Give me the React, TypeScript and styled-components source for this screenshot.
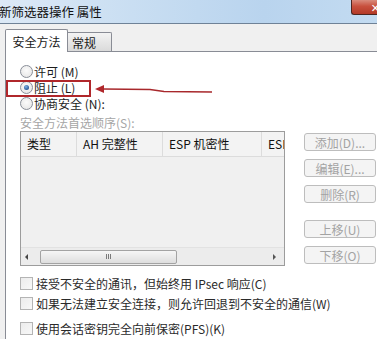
import styled, { createGlobalStyle } from "styled-components"

const GlobalStyle = createGlobalStyle`
  html, body {
    margin: 0;
    padding: 0;
    background: #f0f0f0;
    overflow: hidden;
  }
  body {
    font-family: "Noto Sans CJK SC", "DejaVu Sans", sans-serif;
    font-size: 12px;
    color: #1a1a1a;
  }
`

const Window = styled.div`
  position: relative;
  width: 377px;
  height: 339px;
  overflow: hidden;
  display: flex;
  flex-direction: column;
  background: #f0f0f0;
`

const TitleBar = styled.div`
  height: 23px;
  flex-shrink: 0;
  display: flex;
  justify-content: space-between;
  align-items: flex-start;
  border-bottom: 1px solid #6f8297;
  background: linear-gradient(to right, #dce9f6 0%, #c9def2 35%, #b9d4ee 70%, #c3dbf1 100%);
`

const Title = styled.div`
  margin-left: -1px;
  line-height: 23px;
  font-size: 12.5px;
  color: #111;
`

const CloseBtn = styled.div`
  width: 25px;
  height: 14px;
  border: 1px solid #4d2620;
  border-top: none;
  border-right: none;
  border-radius: 0 0 0 3px;
  background: linear-gradient(#d98b7c 0%, #c8503d 45%, #b33a28 100%);
  display: flex;
  justify-content: flex-end;
  align-items: center;
  overflow: hidden;
  color: #fff;
  font-size: 11px;
  font-weight: bold;
  line-height: 1;
`

const Body = styled.div`
  flex: 1;
  display: flex;
  flex-direction: column;
  padding: 5px 0 0 5px;
`

const TabStrip = styled.div`
  height: 22px;
  display: flex;
  align-items: flex-end;
`

const Tab = styled.div<{ $active?: boolean }>`
  box-sizing: border-box;
  border: 1px solid #898c95;
  border-bottom: none;
  display: flex;
  align-items: center;
  position: relative;
  z-index: ${(p) => (p.$active ? 1 : 0)};
  ${(p) =>
    p.$active
      ? `
    width: 63px;
    height: 23px;
    margin-bottom: -1px;
    justify-content: center;
    background: #fff;
    border-radius: 2px 2px 0 0;
  `
      : `
    width: 44px;
    height: 19px;
    padding-left: 4px;
    border-left: none;
    background: linear-gradient(#f3f3f3, #dadada);
    border-radius: 0 2px 0 0;
  `}
`

const Panel = styled.div`
  flex: 1;
  background: #fff;
  border-left: 1px solid #898c95;
  border-top: 1px solid #898c95;
  padding: 11px 0 0 14px;
  display: flex;
  flex-direction: column;
`

const OptionRow = styled.label`
  height: 16px;
  display: flex;
  align-items: center;
  gap: 1px;
  color: #1c1c1c;
`

const Radio = styled.span<{ $checked?: boolean }>`
  box-sizing: border-box;
  width: 13px;
  height: 13px;
  border-radius: 50%;
  border: 1px solid #8a8f99;
  background: radial-gradient(circle at 50% 40%, #fbfbfb 0%, #e3e3e3 100%);
  display: flex;
  align-items: center;
  justify-content: center;
  &::after {
    content: "";
    display: ${(p) => (p.$checked ? "block" : "none")};
    width: 5px;
    height: 5px;
    border-radius: 50%;
    background: radial-gradient(circle at 40% 35%, #7fb2e6 0%, #1f4f8e 80%);
  }
`

const GroupLabel = styled.div`
  margin-top: 4px;
  line-height: 16px;
  color: #a6a6a6;
`

const ListRow = styled.div`
  display: flex;
  gap: 19px;
`

const ListBox = styled.div`
  box-sizing: border-box;
  width: 265px;
  height: 135px;
  border: 1px solid #9c9c9c;
  background: #f0f0f0;
  display: flex;
  flex-direction: column;
  overflow: hidden;
`

const HeaderRow = styled.div`
  height: 24px;
  flex-shrink: 0;
  display: flex;
  border-bottom: 1px solid #dcdcdc;
  background: #f3f3f3;
`

const HeaderCell = styled.div<{ $w: number }>`
  box-sizing: border-box;
  width: ${(p) => p.$w}px;
  flex-shrink: 0;
  padding-left: 6px;
  line-height: 24px;
  white-space: nowrap;
  overflow: hidden;
  color: #111;
  border-right: 1px solid #dcdcdc;
`

const ListArea = styled.div`
  flex: 1;
`

const HScroll = styled.div`
  height: 17px;
  flex-shrink: 0;
  border-top: 1px solid #e2e2e2;
  background: #ececec;
  display: flex;
  align-items: center;
  padding: 0 8px 0 4px;
`

const Arrow = styled.span<{ $dir: "left" | "right" }>`
  width: 0;
  height: 0;
  border-top: 3px solid transparent;
  border-bottom: 3px solid transparent;
  ${(p) =>
    p.$dir === "left"
      ? "border-right: 3px solid #444; margin-right: 12px;"
      : "border-left: 3px solid #555; margin-left: auto;"}
`

const Thumb = styled.div`
  box-sizing: border-box;
  width: 137px;
  height: 14px;
  border: 1px solid #a3a3a3;
  border-radius: 2px;
  background: linear-gradient(#f6f6f6, #dedede);
  display: flex;
  justify-content: center;
  align-items: center;
  gap: 1px;
`

const Grip = styled.span`
  width: 1px;
  height: 5px;
  background: #7a7a7a;
`

const ButtonCol = styled.div`
  width: 72px;
  padding-top: 2px;
  display: flex;
  flex-direction: column;
  gap: 8px;
`

const Btn = styled.div<{ $spaced?: boolean }>`
  box-sizing: border-box;
  height: 18px;
  border: 1px solid #bdbdbd;
  border-radius: 3px;
  background: #f4f4f4;
  color: #a3a3a3;
  display: flex;
  align-items: center;
  justify-content: center;
  white-space: nowrap;
  margin-top: ${(p) => (p.$spaced ? "9px" : "0")};
`

const CheckList = styled.div`
  margin-top: 7px;
  display: flex;
  flex-direction: column;
`

const CheckRow = styled.label<{ $spaced?: boolean }>`
  height: 20px;
  display: flex;
  align-items: center;
  gap: 3px;
  white-space: nowrap;
  color: #2a2a2a;
  margin-top: ${(p) => (p.$spaced ? "5px" : "0")};
`

const CheckBox = styled.span`
  box-sizing: border-box;
  width: 13px;
  height: 13px;
  flex-shrink: 0;
  border: 1px solid #b4b4b4;
  background: linear-gradient(135deg, #ececec, #f8f8f8);
`

const Highlight = styled.div`
  position: absolute;
  left: 6px;
  top: 80px;
  width: 85px;
  height: 17px;
  box-sizing: border-box;
  border: 2.5px solid #b0272b;
`

const Pointer = styled.svg`
  position: absolute;
  left: 94px;
  top: 83px;
`

const columns = [
  { label: "类型", w: 56 },
  { label: "AH 完整性", w: 86 },
  { label: "ESP 机密性", w: 99 },
  { label: "ESP", w: 40 },
]

export default function App() {
  return (
    <Window>
      <GlobalStyle />
      <TitleBar>
        <Title>新筛选器操作 属性</Title>
        <CloseBtn>
          <span style={{ marginRight: -3 }}>✕</span>
        </CloseBtn>
      </TitleBar>
      <Body>
        <TabStrip>
          <Tab $active>安全方法</Tab>
          <Tab>常规</Tab>
        </TabStrip>
        <Panel>
          <OptionRow>
            <Radio /> 许可 (M)
          </OptionRow>
          <OptionRow>
            <Radio $checked /> 阻止 (L)
          </OptionRow>
          <OptionRow>
            <Radio /> 协商安全 (N):
          </OptionRow>
          <GroupLabel>安全方法首选顺序(S):</GroupLabel>
          <ListRow>
            <ListBox>
              <HeaderRow>
                {columns.map((c) => (
                  <HeaderCell key={c.label} $w={c.w}>
                    {c.label}
                  </HeaderCell>
                ))}
              </HeaderRow>
              <ListArea />
              <HScroll>
                <Arrow $dir="left" />
                <Thumb>
                  <Grip />
                  <Grip />
                  <Grip />
                </Thumb>
                <Arrow $dir="right" />
              </HScroll>
            </ListBox>
            <ButtonCol>
              <Btn>添加(D)...</Btn>
              <Btn>编辑(E)...</Btn>
              <Btn>删除(R)</Btn>
              <Btn $spaced>上移(U)</Btn>
              <Btn>下移(O)</Btn>
            </ButtonCol>
          </ListRow>
          <CheckList>
            <CheckRow>
              <CheckBox />
              接受不安全的通讯，但始终用 IPsec 响应(C)
            </CheckRow>
            <CheckRow>
              <CheckBox />
              如果无法建立安全连接，则允许回退到不安全的通信(W)
            </CheckRow>
            <CheckRow $spaced>
              <CheckBox />
              使用会话密钥完全向前保密(PFS)(K)
            </CheckRow>
          </CheckList>
        </Panel>
      </Body>
      <Highlight />
      <Pointer width="120" height="12" viewBox="0 0 120 12">
        <polygon points="1,6 10,2 10,10" fill="#b0272b" />
        <polyline points="9,6 56,6.5 70,8.5 118,9" fill="none" stroke="#a8282c" strokeWidth="1.3" />
      </Pointer>
    </Window>
  )
}
